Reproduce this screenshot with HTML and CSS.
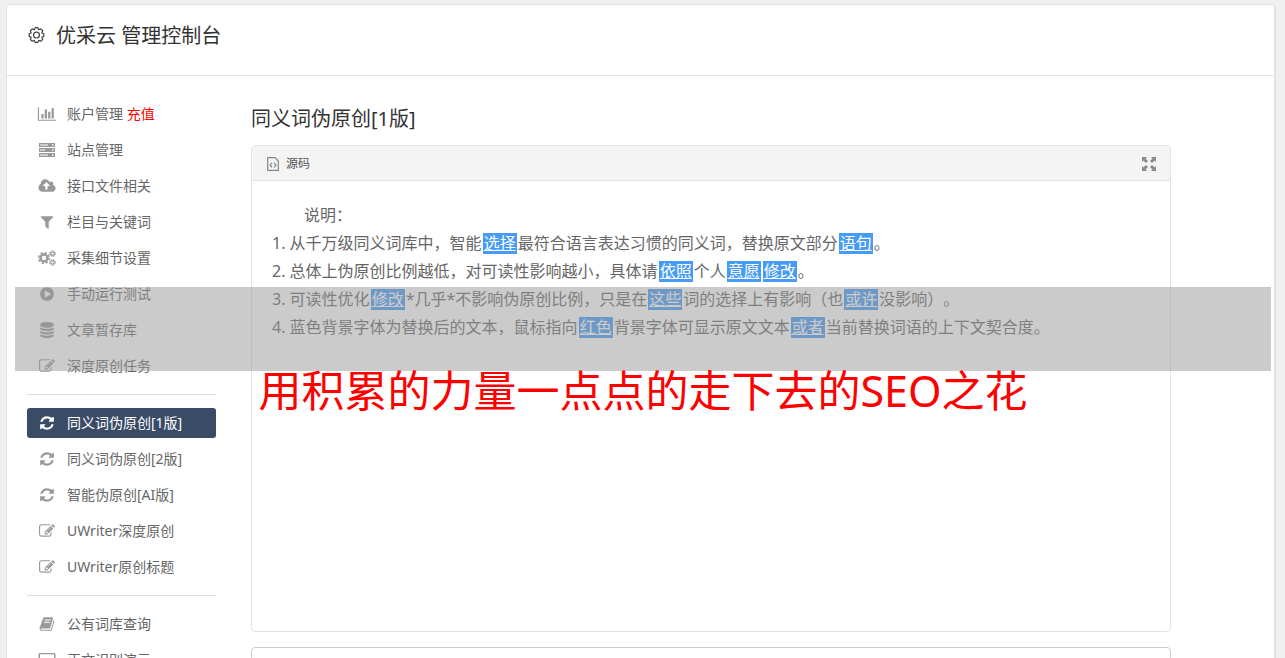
FILE: index.html
```html
<!DOCTYPE html>
<html lang="zh-CN">
<head>
<meta charset="utf-8">
<title>优采云 管理控制台</title>
<link rel="stylesheet" href="styles.css">
</head>
<body>
<svg class="sprite" aria-hidden="true">
  <symbol id="refresh" viewBox="0 0 1792 1792"><path d="M1639 1056q0 5-1 7-64 268-268 434.500t-478 166.500q-146 0-282.500-55t-243.500-157l-129 129q-19 19-45 19t-45-19-19-45v-448q0-26 19-45t45-19h448q26 0 45 19t19 45-19 45l-137 137q71 66 161 102t187 36q134 0 250-65t186-179q11-17 53-117 8-23 30-23h192q13 0 22.500 9.500t9.500 22.500zm25-800v448q0 26-19 45t-45 19h-448q-26 0-45-19t-19-45 19-45l138-138q-148-137-349-137-134 0-250 65t-186 179q-11 17-53 117-8 23-30 23h-199q-13 0-22.500-9.500t-9.500-22.500v-7q65-268 270-434.500t480-166.500q146 0 284 55.500t245 156.500l130-129q19-19 45-19t45 19 19 45z"/></symbol>
  <symbol id="edit" viewBox="0 0 1792 1792"><path d="M888 1184l116-116-152-152-116 116v56h96v96h56zm440-720q-16-16-33 1l-350 350q-17 17-1 33t33-1l350-350q17-17 1-33zm80 594v190q0 119-84.500 203.500t-203.500 84.500h-832q-119 0-203.500-84.500t-84.500-203.500v-832q0-119 84.500-203.500t203.500-84.500h832q63 0 117 25 15 7 18 23 3 17-9 29l-49 49q-14 14-32 8-23-6-45-6h-832q-66 0-113 47t-47 113v832q0 66 47 113t113 47h832q66 0 113-47t47-113v-126q0-13 9-22l64-64q15-15 35-7t20 29zm-96-738l288 288-672 672h-288v-288zm444 132l-92 92-288-288 92-92q28-28 68-28t68 28l152 152q28 28 28 68t-28 68z"/></symbol>
  <symbol id="chart" viewBox="0 0 2048 1792"><path d="M640 896v512h-256v-512h256zm384-512v1024h-256v-1024h256zm1024 1152v128h-2048v-1536h128v1408h1920zm-640-896v768h-256v-768h256zm384-384v1152h-256v-1152h256z"/></symbol>
  <symbol id="server" viewBox="0 0 18 16"><path fill-rule="evenodd" d="M1 1h16v4H1zM1 6h16v4H1zM1 11h16v4H1zM2 2.500v1h8v-1zM2 7.500v1h5v-1zM2 12.500v1h8v-1zM14 2.300v1.400h1.500V2.300zM14 7.300v1.400h1.500V7.300zM14 12.300v1.400h1.500v-1.400z"/></symbol>
  <symbol id="cloud" viewBox="0 0 1920 1792"><path d="M1280 864q0-14-9-23l-352-352q-9-9-23-9t-23 9l-351 351q-10 12-10 24 0 14 9 23t23 9h224v352q0 13 9.500 22.500t22.500 9.500h192q13 0 22.500-9.500t9.500-22.500v-352h224q13 0 22.500-9.500t9.500-22.500zm640 288q0 159-112.500 271.500t-271.500 112.500h-1088q-185 0-316.500-131.500t-131.500-316.500q0-130 70-240t188-165q-2-30-2-43 0-212 150-362t362-150q156 0 285.500 87t188.500 231q71-62 166-62 106 0 181 75t75 181q0 76-41 138 130 31 213.500 135.500t83.500 238.500z"/></symbol>
  <symbol id="filter" viewBox="0 0 1792 1792"><path d="M1595 295q17 41-14 70l-493 493v742q0 42-39 59-13 5-25 5-27 0-45-19l-256-256q-19-19-19-45v-486l-493-493q-31-29-14-70 17-39 59-39h1280q42 0 59 39z"/></symbol>
  <symbol id="cogs" viewBox="0 0 18 16"><g fill="none" stroke="currentColor"><circle cx="6" cy="8" r="3.500" stroke-width="2.400"/><circle cx="6" cy="8" r="5.300" stroke-width="1.600" stroke-dasharray="2.200 1.963"/><circle cx="14.500" cy="3.600" r="1.800" stroke-width="1.300"/><circle cx="14.500" cy="3.600" r="2.900" stroke-width="1" stroke-dasharray="1.300 .978"/><circle cx="14.500" cy="12.400" r="1.800" stroke-width="1.300"/><circle cx="14.500" cy="12.400" r="2.900" stroke-width="1" stroke-dasharray="1.300 .978"/></g></symbol>
  <symbol id="play" viewBox="0 0 1792 1792"><path d="M896 128q209 0 385.500 103t279.500 279.500 103 385.500-103 385.500-279.500 279.500-385.500 103-385.500-103-279.500-279.500-103-385.500 103-385.500 279.500-279.500 385.500-103zm384 823q32-18 32-55t-32-55l-544-320q-31-19-64-1-32 19-32 56v640q0 37 32 56 16 8 32 8 17 0 32-9z"/></symbol>
  <symbol id="database" viewBox="0 0 1792 1792"><path d="M896 768q237 0 443-43t325-127v170q0 69-103 128t-280 93.500-385 34.500-385-34.500-280-93.500-103-128v-170q119 84 325 127t443 43zm0 768q237 0 443-43t325-127v170q0 69-103 128t-280 93.500-385 34.500-385-34.500-280-93.500-103-128v-170q119 84 325 127t443 43zm0-384q237 0 443-43t325-127v170q0 69-103 128t-280 93.500-385 34.500-385-34.500-280-93.500-103-128v-170q119 84 325 127t443 43zm0-1152q208 0 385 34.500t280 93.500 103 128v128q0 69-103 128t-280 93.500-385 34.500-385-34.500-280-93.500-103-128v-128q0-69 103-128t280-93.500 385-34.500z"/></symbol>
  <symbol id="book" viewBox="0 0 1792 1792"><path d="M1703 478q40 57 18 129l-275 906q-19 64-76.500 107.500t-122.500 43.500h-923q-77 0-148.500-53.500t-99.500-131.500q-24-67-2-127 0-4 3-27t4-37q1-8-3-21.500t-3-19.500q2-11 8-21t16.500-23.500 16.500-23.500q23-38 45-91.500t30-91.500q3-10 .5-30t-.5-28q3-11 17-28t17-23q21-36 42-92t25-90q1-9-2.500-32t.5-28q4-13 22-30.500t22-22.500q19-26 42.500-84.500t27.500-96.500q1-8-3-25.500t-2-26.500q2-8 9-18t18-23 17-21q8-12 16.500-30.500t15-35 16-36 19.500-32 26.500-23.500 36-11.500 47.500 5.500l-1 3q38-9 51-9h761q74 0 114 56t18 130l-274 906q-36 119-71.500 153.500t-128.500 34.500h-869q-27 0-38 15-11 16-1 43 24 70 144 70h923q29 0 56-15.500t35-41.500l300-987q7-22 5-57 38 15 59 43zm-1064 2q-4 13 2 22.500t20 9.500h608q13 0 25.500-9.500t16.500-22.500l21-64q4-13-2-22.500t-20-9.500h-608q-13 0-25.500 9.500t-16.500 22.500zm-83 256q-4 13 2 22.500t20 9.500h608q13 0 25.500-9.500t16.500-22.500l21-64q4-13-2-22.500t-20-9.500h-608q-13 0-25.500 9.500t-16.500 22.500z"/></symbol>
  <symbol id="screen" viewBox="0 0 18 16"><path fill-rule="evenodd" d="M2 1h14q1.500 0 1.500 1.500v9Q17.500 13 16 13H2Q.5 13 .5 11.500v-9Q.5 1 2 1zm0 1.300v9h14v-9zM6 14h6v1.500H6z"/></symbol>
</svg>

<div class="panel">
  <header class="header">
    <svg class="gear" viewBox="0 0 20 20" aria-hidden="true"><path d="M8.600 1.300h2.800l.9 2.100 2.200-.9 2 2-.9 2.200 2.100.9v2.800l-2.100.9.9 2.200-2 2-2.200-.9-.9 2.100H8.600l-.9-2.100-2.200.9-2-2 .9-2.200-2.100-.9V7.600l2.100-.9-.9-2.200 2-2 2.200.9z"/><circle cx="10" cy="9" r="3.100"/></svg>
    <h1 class="title">优采云 管理控制台</h1>
  </header>
  <div class="layout">
    <nav class="sidebar">
      <ul class="menu">
        <li><a class="item" href="#"><svg class="icon"><use href="#chart"/></svg><span>账户管理 <span class="hot">充值</span></span></a></li>
        <li><a class="item" href="#"><svg class="icon"><use href="#server"/></svg>站点管理</a></li>
        <li><a class="item" href="#"><svg class="icon"><use href="#cloud"/></svg>接口文件相关</a></li>
        <li><a class="item" href="#"><svg class="icon"><use href="#filter"/></svg>栏目与关键词</a></li>
        <li><a class="item" href="#"><svg class="icon"><use href="#cogs"/></svg>采集细节设置</a></li>
        <li><a class="item" href="#"><svg class="icon"><use href="#play"/></svg>手动运行测试</a></li>
        <li><a class="item" href="#"><svg class="icon"><use href="#database"/></svg>文章暂存库</a></li>
        <li><a class="item" href="#"><svg class="icon"><use href="#edit"/></svg>深度原创任务</a></li>
      </ul>
      <ul class="menu">
        <li><a class="item active" href="#" aria-current="page"><svg class="icon"><use href="#refresh"/></svg>同义词伪原创[1版]</a></li>
        <li><a class="item" href="#"><svg class="icon"><use href="#refresh"/></svg>同义词伪原创[2版]</a></li>
        <li><a class="item" href="#"><svg class="icon"><use href="#refresh"/></svg>智能伪原创[AI版]</a></li>
        <li><a class="item" href="#"><svg class="icon"><use href="#edit"/></svg>UWriter深度原创</a></li>
        <li><a class="item" href="#"><svg class="icon"><use href="#edit"/></svg>UWriter原创标题</a></li>
      </ul>
      <ul class="menu">
        <li><a class="item" href="#"><svg class="icon"><use href="#book"/></svg>公有词库查询</a></li>
        <li><a class="item" href="#"><svg class="icon"><use href="#screen"/></svg>正文识别演示</a></li>
      </ul>
    </nav>
    <main class="main">
      <h2 class="title">同义词伪原创[1版]</h2>
      <section class="editor">
        <div class="toolbar">
          <button class="tool" type="button"><svg class="source" viewBox="0 0 12 14" aria-hidden="true"><path d="M.7.7h7.300L11.300 4v9.300H.7z"/><path d="M5 6 3 8.200 5 10.400M7 6l2 2.200-2 2.200"/></svg>源码</button>
          <button class="tool" type="button" aria-label="全屏"><svg class="expand" viewBox="0 0 14 14" aria-hidden="true"><path d="M0 0h5L3.500 1.500 6 4 4 6 1.500 3.500 0 5zM14 0v5l-1.500-1.500L10 6 8 4l2.500-2.500L9 0zM0 14V9l1.500 1.500L4 8l2 2-2.500 2.500L5 14zM14 14H9l1.500-1.500L8 10l2-2 2.500 2.500L14 9z"/></svg></button>
        </div>
        <div class="content">
          <p class="lead">说明：</p>
          <ol class="notes">
            <li>从千万级同义词库中，智能<a class="swap" href="#">选择</a>最符合语言表达习惯的同义词，替换原文部分<a class="swap" href="#">语句</a>。</li>
            <li>总体上伪原创比例越低，对可读性影响越小，具体请<a class="swap" href="#">依照</a>个人<a class="swap" href="#">意愿</a><a class="swap" href="#">修改</a>。</li>
            <li>可读性优化<a class="swap" href="#">修改</a>*几乎*不影响伪原创比例，只是在<a class="swap" href="#">这些</a>词的选择上有影响（也<a class="swap" href="#">或许</a>没影响）。</li>
            <li>蓝色背景字体为替换后的文本，鼠标指向<a class="swap" href="#">红色</a>背景字体可显示原文文本<a class="swap" href="#">或者</a>当前替换词语的上下文契合度。</li>
          </ol>
        </div>
      </section>
      <textarea class="output" aria-label="结果"></textarea>
    </main>
  </div>
</div>
<div class="banner">
  <div class="band"></div>
  <p class="slogan">用积累的力量一点点的走下去的SEO之花</p>
</div>
</body>
</html>
```

FILE: styles.css
```css
* { box-sizing: border-box; }

body {
  position: relative;
  height: 100vh;
  margin: 0;
  padding: 4px 9px 0 6px;
  overflow: hidden;
  background: #f0f0f0;
  color: #666;
  font: 14px/30px "Noto Sans", "Noto Sans CJK SC", sans-serif;
  text-spacing-trim: space-all;
}

h1, h2, p, ul, ol { margin: 0; padding: 0; }
a { color: inherit; text-decoration: none; }
.sprite { position: absolute; width: 0; height: 0; }

.panel {
  border: 1px solid #e3e3e3;
  border-right-width: 2px;
  border-radius: 4px;
  background: #fff;
}

.header {
  display: flex;
  align-items: center;
  gap: 10px;
  padding: 16px 20px 24px;
  border-bottom: 1px solid #e3e3e3;
}
.title { color: #333; font-size: 20px; line-height: 30px; font-weight: 400; }
.gear { width: 19px; height: 20px; fill: none; stroke: #444; stroke-width: 1.3; stroke-linejoin: round; }

.layout { display: flex; gap: 35px; padding: 23px 103px 20px 20px; }

.sidebar { flex: none; width: 189px; }
.menu { display: grid; gap: 6px; list-style: none; }
.menu + .menu { margin-top: 13px; padding-top: 13px; border-top: 1px solid #ddd; }
.item {
  display: flex;
  align-items: center;
  gap: 10px;
  height: 30px;
  padding: 0 10px;
  border-radius: 3px;
}
.icon { flex: none; width: 20px; height: 16px; fill: #999; color: #999; }
.active { background: #3a4b66; color: #fff; }
.active .icon { fill: #fff; }
.hot { color: #f00; }

.main { flex: 1; min-width: 0; padding-top: 5px; }
.editor {
  min-height: 487px;
  margin-top: 11px;
  border: 1px solid #e3e3e3;
  border-radius: 4px;
}
.toolbar {
  display: flex;
  justify-content: space-between;
  align-items: center;
  height: 35px;
  padding: 2px 14px 0;
  border-bottom: 1px solid #e3e3e3;
  background: #f4f4f4;
}
.tool {
  display: flex;
  align-items: center;
  gap: 6px;
  padding: 0;
  border: 0;
  background: none;
  color: #555;
  font: inherit;
  font-size: 12px;
}
.source { width: 14px; height: 14px; fill: none; stroke: #888; stroke-width: 1.2; }
.expand { width: 14px; height: 14px; fill: #888; }

.content { padding: 20px; font-size: 16px; line-height: 28px; }
.lead { text-indent: 2em; }
.notes { list-style-position: inside; }
.swap {
  display: inline-block;
  margin: 0 1px;
  padding: 0 1px;
  background: #459bf5;
  color: #fff;
  line-height: 21px;
  text-decoration: underline;
}
.output {
  display: block;
  width: 100%;
  height: 120px;
  margin-top: 15px;
  border: 1px solid #ccc;
  border-radius: 4px;
  resize: none;
}

.banner { position: absolute; top: 287px; left: 15px; right: 14px; pointer-events: none; }
.band { height: 84px; background: rgba(152, 152, 152, .5); }
.slogan { color: #f00; font-size: 43px; line-height: 40px; text-align: center; }
```
